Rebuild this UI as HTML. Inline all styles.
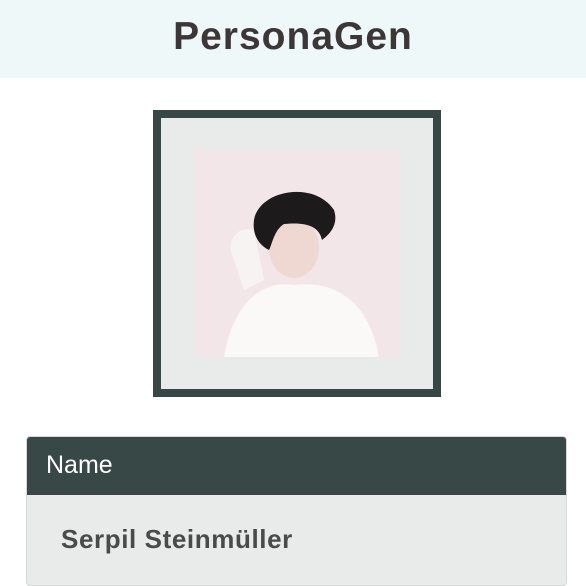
<!DOCTYPE html>
<html><head><style>
*{margin:0;padding:0;box-sizing:border-box}
body{width:586px;height:586px;background:#fff;font-family:"Liberation Sans",sans-serif;position:relative;overflow:hidden}
.hdr{position:absolute;left:0;top:0;width:586px;height:78px;background:#eef8f9;text-align:center;line-height:74px;font-size:39px;font-weight:bold;color:#3d3636;letter-spacing:1px}
.frame{position:absolute;left:153px;top:110px;width:288px;height:287px;border:8px solid #374745;background:#e8ebea}
.photo{position:absolute;left:33px;top:32px;width:206px;height:207px;background:#f3e6e8;overflow:hidden}
.card{position:absolute;left:26px;top:436px;width:541px;height:150px;border:1px solid #d4d8d7;border-radius:4px;background:#e8ebea;overflow:hidden}
.ch{height:58px;background:#384846;color:#fff;font-size:25px;line-height:56px;padding-left:19px;font-weight:300}
.cb{padding-left:34px;padding-top:29px;font-size:26px;font-weight:bold;color:#4a4a4a;letter-spacing:0.6px}
</style></head><body>
<div class="hdr">PersonaGen</div>
<div class="frame"><div class="photo">
<svg width="206" height="207" viewBox="0 0 206 207">
<path d="M30 207 C40 150 70 130 100 135 C140 130 175 150 185 207Z" fill="#fbf8f8"/>
<path d="M40 110 C30 90 45 75 60 80 L70 130 L50 140Z" fill="#f8f3f3"/>
<ellipse cx="100" cy="98" rx="25" ry="30" fill="#efd8d2"/>
<path d="M60 70 C65 40 120 30 140 60 C145 75 135 85 128 90 C125 75 110 72 90 74 C80 80 78 95 75 100 C65 95 58 85 60 70Z" fill="#1d1a1c"/>
</svg>
</div></div>
<div class="card"><div class="ch">Name</div><div class="cb">Serpil Steinmüller</div></div>
</body></html>
